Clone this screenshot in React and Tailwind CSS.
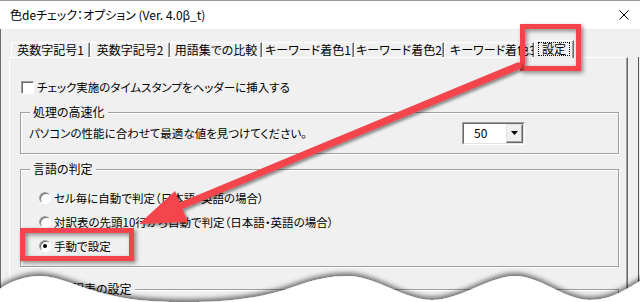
const ui = "font-['Noto_Sans_CJK_JP','Noto_Sans',sans-serif] [font-feature-settings:'palt']";

function Tab({ label, className }) {
  return (
    <div
      className={`flex h-[15px] shrink-0 items-center overflow-hidden whitespace-nowrap border-t border-l border-r border-t-white border-l-white border-r-[#696969] shadow-[inset_-1px_0_0_#a0a0a0] text-[12px] leading-[14px] ${className}`}
    >
      {label}
    </div>
  );
}

function Radio({ checked, label }) {
  return (
    <div className="flex h-[24px] items-center">
      <span className="flex h-[12px] w-[12px] items-center justify-center rounded-full border border-t-[#a0a0a0] border-l-[#a0a0a0] border-r-white border-b-white bg-white shadow-[inset_1px_1px_0_#696969]">
        {checked && <span className="h-[4px] w-[4px] rounded-full bg-black" />}
      </span>
      <span className="ml-[3px] text-[11.5px] leading-[14px]">{label}</span>
    </div>
  );
}

function Group({ label, labelLeft, className, children }) {
  return (
    <div
      className={`relative ml-[10px] w-[599px] border border-[#a0a0a0] shadow-[inset_1px_1px_0_#fff,1px_1px_0_#fff] ${className}`}
    >
      <span
        className={`absolute -top-[8px] bg-[#f0f0f0] px-[3px] text-[12px] leading-[14px] ${labelLeft}`}
      >
        {label}
      </span>
      {children}
    </div>
  );
}

export default function App() {
  return (
    <div className={`relative h-[302px] w-[640px] overflow-hidden bg-[#f0f0f0] text-black ${ui}`}>
      {/* title bar */}
      <div className="flex h-[29px] items-center justify-between border-t border-[#9a9a9a] bg-white pl-[10px] pr-[11px]">
        <span className="text-[12px] leading-[14px]">色deチェック：オプション (Ver. 4.0β_t)</span>
        <svg width="10" height="10" viewBox="0 0 10 10">
          <path d="M0.5 0.5 L9.5 9.5 M9.5 0.5 L0.5 9.5" stroke="#000" strokeWidth="1" />
        </svg>
      </div>

      {/* body */}
      <div className="flex h-[273px] border-l border-[#6e6e6e]">
        <div className="flex flex-col pt-[11px]">
          {/* tabs */}
          <div className="ml-[10px] flex h-[17px] items-end">
            <Tab label="英数字記号1" className="w-[79px] justify-center" />
            <Tab label="英数字記号2" className="w-[80px] justify-center" />
            <Tab label="用語集での比較" className="w-[92px] justify-center" />
            <Tab label="キーワード着色1" className="w-[92px] justify-center" />
            <Tab label="キーワード着色2" className="w-[90px] justify-center" />
            <Tab label="キーワード着色3" className="w-[90px] justify-start pl-[5px]" />
            <div className="relative z-10 -mb-[1px] flex h-[18px] w-[40px] shrink-0 items-start justify-center border-t border-l border-r border-t-white border-l-white border-r-[#696969] bg-[#f0f0f0] pt-[1px] shadow-[inset_-1px_0_0_#a0a0a0]">
              <span className="border border-dotted border-black px-[3px] text-[12px] leading-[12px]">設定</span>
            </div>
          </div>

          {/* panel */}
          <div className="ml-[8px] h-[250px] w-[619px] border-t border-l border-r border-t-white border-l-white border-r-[#696969] shadow-[inset_-1px_0_0_#a0a0a0]">
            <div className="mt-[21px] flex h-[16px] items-center pl-[11px]">
              <span className="h-[13px] w-[13px] border border-t-[#a0a0a0] border-l-[#a0a0a0] border-r-white border-b-white bg-white shadow-[inset_1px_1px_0_#696969]" />
              <span className="ml-[3px] text-[11.5px] leading-[14px]">チェック実施のタイムスタンプをヘッダーに挿入する</span>
            </div>

            <Group label="処理の高速化" labelLeft="left-[9px]" className="mt-[17px] h-[42px]">
              <div className="flex h-full items-center pl-[8px]">
                <span className="text-[11.5px] leading-[14px]">パソコンの性能に合わせて最適な値を見つけてください。</span>
                <div className="ml-auto mr-[93px] flex h-[23px] w-[63px] border border-t-[#a0a0a0] border-l-[#a0a0a0] border-r-white border-b-white">
                  <div className="flex flex-1 border border-t-[#696969] border-l-[#696969] border-r-[#e3e3e3] border-b-[#e3e3e3] bg-white">
                    <span className="flex flex-1 items-center pl-[10px] text-[12px] leading-[14px]">50</span>
                    <div className="flex w-[17px] items-center justify-center border border-t-[#e3e3e3] border-l-[#e3e3e3] border-r-[#696969] border-b-[#696969] bg-[#f0f0f0] shadow-[inset_-1px_-1px_0_#a0a0a0]">
                      <svg width="7" height="4" viewBox="0 0 7 4">
                        <path d="M0 0 H7 L3.5 4 Z" fill="#000" />
                      </svg>
                    </div>
                  </div>
                </div>
              </div>
            </Group>

            <Group label="言語の判定" labelLeft="left-[9px]" className="mt-[15px] h-[98px]">
              <div className="flex flex-col pl-[18px] pt-[16px]">
                <Radio label="セル毎に自動で判定（日本語・英語の場合）" />
                <Radio label="対訳表の先頭10行から自動で判定（日本語・英語の場合）" />
                <Radio checked label="手動で設定" />
              </div>
            </Group>

            <Group label="対訳表の設定" labelLeft="left-[36px]" className="mt-[22px] h-[40px]" />
          </div>
        </div>
        <div className="ml-[10px] mt-[28px] w-[1px] bg-[#555]" />
      </div>

      {/* callouts */}
      <div className="absolute left-[520px] top-[24px] h-[47px] w-[61px] border-[5px] border-[#f3444c] drop-shadow-[2px_2px_2px_rgba(0,0,0,0.45)]" />
      <div className="absolute left-[20px] top-[228px] h-[33px] w-[114px] border-[5px] border-[#f3444c] drop-shadow-[2px_2px_2px_rgba(0,0,0,0.45)]" />

      <svg className="pointer-events-none absolute left-0 top-0" width="640" height="302" viewBox="0 0 640 302">
        <defs>
          <filter id="ash" x="-10%" y="-10%" width="120%" height="130%">
            <feDropShadow dx="2" dy="2" stdDeviation="1.6" floodColor="#000" floodOpacity="0.45" />
          </filter>
          <filter id="wsh" x="-10%" y="-50%" width="120%" height="200%">
            <feDropShadow dx="0" dy="-3" stdDeviation="2.5" floodColor="#000" floodOpacity="0.55" />
          </filter>
        </defs>
        <g filter="url(#ash)">
          <line x1="518" y1="66" x2="178" y2="207" stroke="#f3444c" strokeWidth="7" strokeLinecap="round" />
          <polygon points="139,224 188,222 175,191" fill="#f3444c" />
        </g>
        <path
          filter="url(#wsh)"
          fill="#fff"
          d="M-5,292 C10,281 25,276 40,276 C65,276 95,298 150,301 C200,304 250,302 290,288 C315,279 330,276 348,276 C375,276 405,300 432,300 C460,300 490,276 515,276 C540,276 565,300 590,300 C612,300 628,288 645,278 L645,320 L-5,320 Z"
        />
      </svg>
    </div>
  );
}
